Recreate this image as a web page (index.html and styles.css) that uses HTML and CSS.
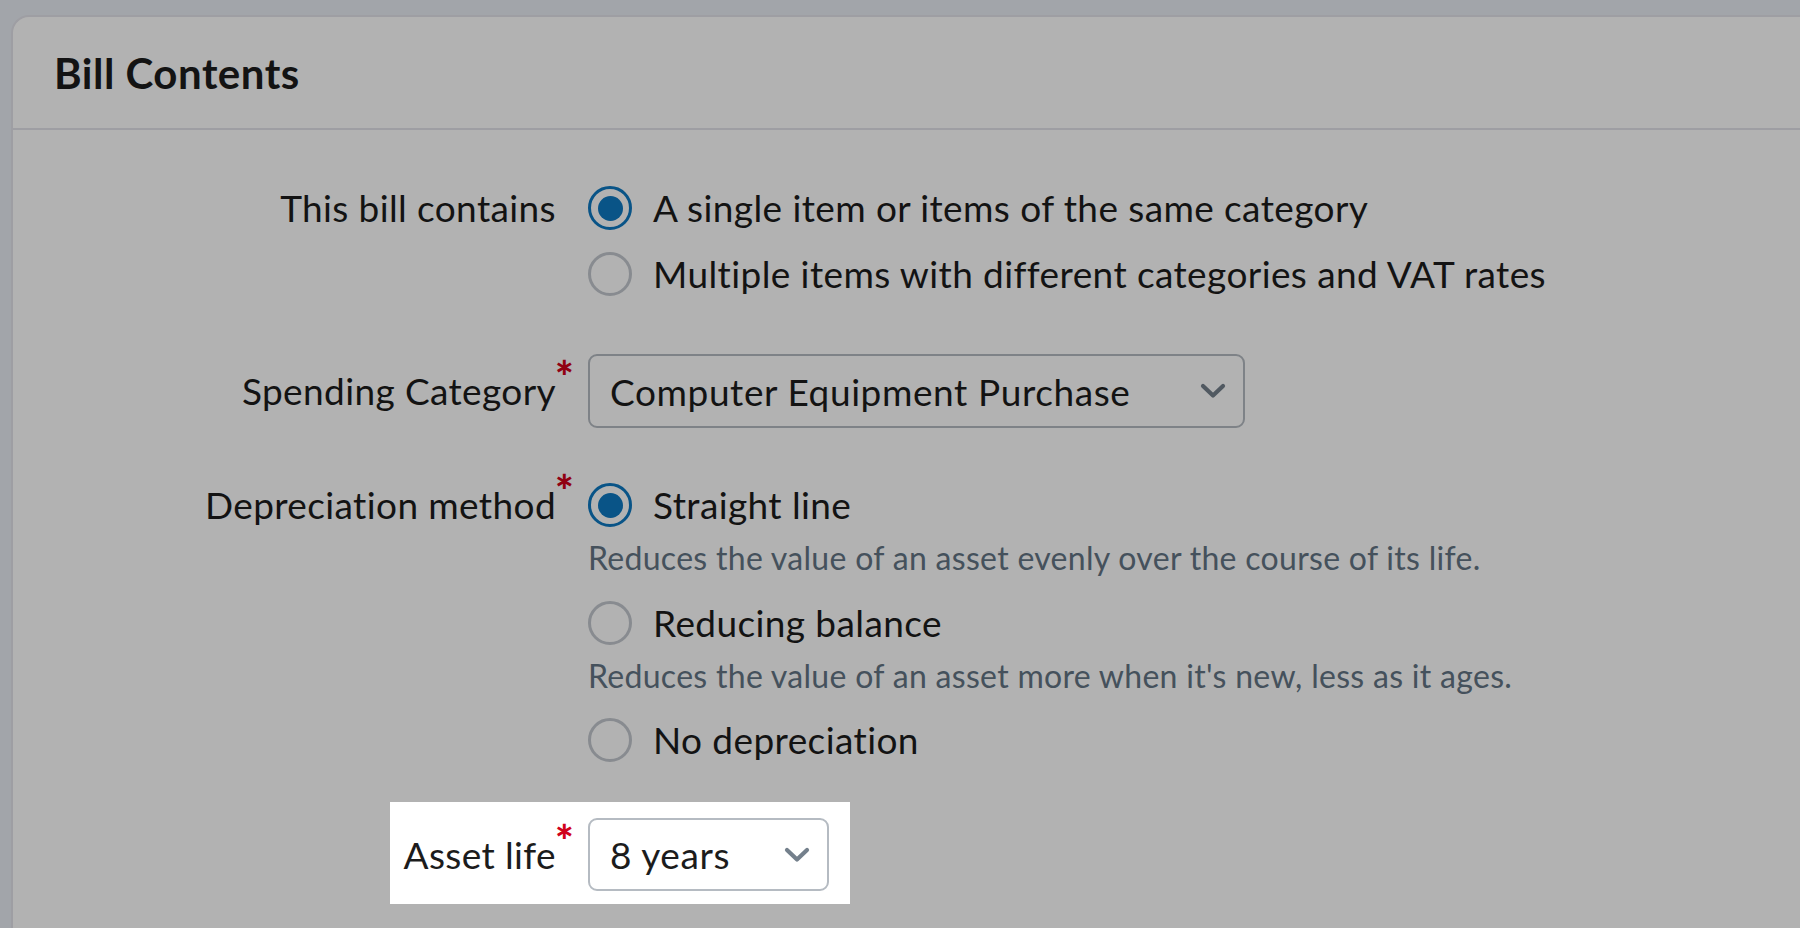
FILE: index.html
```html
<!DOCTYPE html>
<html lang="en">
<head>
<meta charset="utf-8">
<title>Bill Contents</title>
<link rel="stylesheet" href="styles.css">
</head>
<body>
<section class="card">
  <header class="card-head">
    <h2 class="card-title">Bill Contents</h2>
  </header>
  <div class="form">
    <div class="row row-contains">
      <div class="label">This bill contains</div>
      <div class="options">
        <div class="option">
          <span class="radio checked"></span>
          <span class="option-text">A single item or items of the same category</span>
        </div>
        <div class="option">
          <span class="radio"></span>
          <span class="option-text">Multiple items with different categories and VAT rates</span>
        </div>
      </div>
    </div>

    <div class="row row-category">
      <div class="label"><span class="req">Spending Category</span></div>
      <div class="select select-wide">
        <span class="select-value">Computer Equipment Purchase</span>
        <svg class="chev" width="26" height="16" viewBox="0 0 26 16"><polyline points="3,3 13,12.5 23,3" fill="none" stroke="currentColor" stroke-width="4.2" stroke-linecap="round" stroke-linejoin="round"/></svg>
      </div>
    </div>

    <div class="row row-depr">
      <div class="label"><span class="req">Depreciation method</span></div>
      <div class="options">
        <div class="option">
          <span class="radio checked"></span>
          <span class="option-text">Straight line</span>
        </div>
        <p class="help">Reduces the value of an asset evenly over the course of its life.</p>
        <div class="option option-spaced">
          <span class="radio"></span>
          <span class="option-text">Reducing balance</span>
        </div>
        <p class="help">Reduces the value of an asset more when it's new, less as it ages.</p>
        <div class="option option-spaced">
          <span class="radio"></span>
          <span class="option-text">No depreciation</span>
        </div>
      </div>
    </div>

    <div class="row-asset">
      <div class="spotlight">
        <div class="label"><span class="req">Asset life</span></div>
        <div class="select select-narrow">
          <span class="select-value">8 years</span>
          <svg class="chev" width="26" height="16" viewBox="0 0 26 16"><polyline points="3,3 13,12.5 23,3" fill="none" stroke="currentColor" stroke-width="4.2" stroke-linecap="round" stroke-linejoin="round"/></svg>
        </div>
      </div>
    </div>
  </div>
</section>
</body>
</html>
```

FILE: styles.css
```css
html, body {
  margin: 0;
  padding: 0;
  height: 100%;
  overflow: hidden;
}

body {
  background: #e9edf4;
  font-family: "Lato", "Liberation Sans", sans-serif;
  color: #1c1c1c;
}

.card {
  margin: 15px 0 0 11px;
  background: #ffffff;
  border-top: 2px solid #e2e2ea;
  border-left: 2px solid #e2e2ea;
  border-top-left-radius: 18px;
  min-height: 1100px;
}

.card-head {
  height: 111px;
  display: flex;
  align-items: center;
  padding-left: 41px;
  border-bottom: 2px solid #e2e2ea;
}

.card-title {
  margin: 0;
  font-size: 42px;
  font-weight: 700;
  letter-spacing: 0.5px;
  line-height: 1;
  padding-top: 0;
}

.form {
  display: flex;
  flex-direction: column;
  padding-top: 56px;
}

.row {
  display: grid;
  grid-template-columns: 543px 1fr;
  column-gap: 32px;
}

.row-category {
  margin-top: 58px;
  align-items: center;
}

.row-depr {
  margin-top: 55px;
  align-items: start;
}

.label {
  text-align: right;
  font-size: 37px;
  letter-spacing: 0.38px;
  line-height: 44px;
  white-space: nowrap;
}

.req {
  position: relative;
}

.req::after {
  content: "*";
  position: absolute;
  left: 100%;
  top: -14px;
  margin-left: -1px;
  color: #d0021b;
  font-weight: 900;
  font-size: 44px;
  line-height: 44px;
  letter-spacing: 0;
}

.options {
  display: flex;
  flex-direction: column;
  gap: 22px;
}

.row-depr .options {
  gap: 0;
}

.option {
  display: flex;
  align-items: center;
  gap: 21px;
  height: 44px;
}

.option-spaced {
  margin-top: 24.5px;
}

.option-text {
  font-size: 37px;
  letter-spacing: 0.4px;
  line-height: 44px;
  white-space: nowrap;
}

.radio {
  flex: none;
  width: 44px;
  height: 44px;
  box-sizing: border-box;
  border-radius: 50%;
  border: 3px solid #c3c8ce;
  background: #ffffff;
  display: flex;
  align-items: center;
  justify-content: center;
}

.radio.checked {
  border-color: #0e79c2;
}

.radio.checked::before {
  content: "";
  width: 25px;
  height: 25px;
  border-radius: 50%;
  background: #0e79c2;
}

.help {
  margin: 13px 0 0;
  font-size: 32px;
  line-height: 36px;
  letter-spacing: 0.3px;
  color: #637585;
  white-space: nowrap;
}

.select {
  box-sizing: border-box;
  height: 74px;
  border: 2px solid #b5bbc2;
  border-radius: 9px;
  background: #ffffff;
  display: flex;
  align-items: center;
  justify-content: space-between;
  padding: 0 17px 0 20px;
}

.select-wide {
  width: 657px;
}

.select-narrow {
  width: 241px;
  height: 73px;
}

.select-value {
  font-size: 37px;
  letter-spacing: 0.6px;
  white-space: nowrap;
}

.chev {
  color: #74808c;
  flex: none;
}

.row-asset {
  margin-top: 40px;
  display: flex;
}

.spotlight {
  position: relative;
  z-index: 10;
  margin-left: 377px;
  background: #ffffff;
  display: grid;
  grid-template-columns: 166px 241px;
  column-gap: 32px;
  align-items: center;
  padding: 16px 21px 13px 0;
  box-shadow: 0 0 0 4000px rgba(0, 0, 0, 0.3);
}
```
